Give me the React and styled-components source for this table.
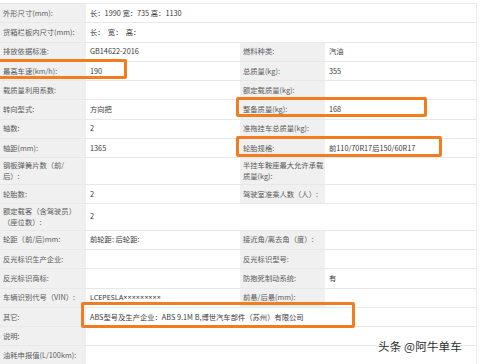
import React from "react";
import styled, { createGlobalStyle } from "styled-components";

const GlobalStyle = createGlobalStyle`
  html, body {
    margin: 0;
    padding: 0;
    background: #ffffff;
  }
  body {
    font-family: 'Noto Sans CJK SC', 'Noto Sans', sans-serif;
  }
`;

const Page = styled.div`
  position: relative;
  width: 480px;
  height: 364px;
  overflow: hidden;
  padding-top: 3px;
  box-sizing: border-box;
`;

const Table = styled.div`
  width: 477px;
  border-top: 1px solid #e8e8e8;
  border-right: 1px solid #ececec;
  box-sizing: border-box;
`;

const Row = styled.div`
  display: grid;
  grid-template-columns: 86px 154px 85px 1fr;
  min-height: ${p => (p.tall ? "26.5px" : "19.3px")};
  border-bottom: 1px solid #e8e8e8;
  box-sizing: border-box;
`;

const Cell = styled.div`
  display: flex;
  align-items: center;
  grid-column: span ${p => p.span || 1};
  font-family: ${p => (p.latin ? "'Noto Sans', 'Noto Sans CJK SC', sans-serif" : "inherit")};
  font-size: 7.3px;
  line-height: 11px;
  white-space: pre;
  overflow: hidden;
  padding: 1px 0 1px ${p => (p.label ? "3px" : "4px")};
  background: ${p => (p.label ? "#f0f0f0" : "#ffffff")};
  color: ${p => (p.label ? "#5a5a5a" : "#3a3a3a")};
`;

const Highlight = styled.div`
  position: absolute;
  border: 3px solid #f47c20;
  border-radius: 2px;
  box-sizing: border-box;
  pointer-events: none;
`;

const Watermark = styled.div`
  position: absolute;
  right: 18px;
  top: 338px;
  font-size: 11.5px;
  color: #2e2e2e;
  letter-spacing: 0.2px;
  text-shadow: 0 0 2px #ffffff, 0 0 3px #ffffff;
`;

const L = (text) => ({ label: true, text });
const V = (text, span, latin) => ({ label: false, text, span, latin });

const rows = [
  [L("外形尺寸(mm):"), V("长：1990 宽：735 高：1130", 3)],
  [L("货箱栏板内尺寸(mm):"), V("长：  宽：  高：", 3)],
  [L("排放依据标准:"), V("GB14622-2016"), L("燃料种类:"), V("汽油")],
  [L("最高车速(km/h):"), V("190"), L("总质量(kg):"), V("355")],
  [L("载质量利用系数:"), V(""), L("额定载质量(kg):"), V("")],
  [L("转向型式:"), V("方向把"), L("整备质量(kg):"), V("168")],
  [L("轴数:"), V("2"), L("准拖挂车总质量(kg):"), V("")],
  [L("轴距(mm):"), V("1365"), L("轮胎规格:"), V("前110/70R17后150/60R17")],
  [L("钢板弹簧片数（前/\n后）:"), V(""), L("半挂车鞍座最大允许承载\n质量(kg):"), V("")],
  [L("轮胎数:"), V("2"), L("驾驶室准乘人数（人）:"), V("")],
  [L("额定载客（含驾驶员）\n（座位数）:"), V("2", 3)],
  [L("轮距（前/后)mm:"), V("前轮距: 后轮距:"), L("接近角/离去角（度）:"), V("")],
  [L("反光标识生产企业:"), V(""), L("反光标识型号:"), V("")],
  [L("反光标识商标:"), V(""), L("防抱死制动系统:"), V("有")],
  [L("车辆识别代号（VIN）:"), V("LCEPESLA×××××××××", 1, true), L("前悬/后悬(mm):"), V("")],
  [L("其它:"), V("ABS型号及生产企业：ABS 9.1M B,博世汽车部件（苏州）有限公司", 3)],
  [L("说明:"), V("", 3)],
  [L("油耗申报值(L/100km):"), V("", 3)],
];

const highlights = [
  { left: -3, top: 59, width: 130, height: 20 },
  { left: 236, top: 97, width: 191, height: 20 },
  { left: 236, top: 136, width: 206, height: 21 },
  { left: 81, top: 302, width: 274, height: 26 },
];

export default function App() {
  return (
    <Page>
      <GlobalStyle />
      <Table>
        {rows.map((cells, i) => (
          <Row key={i} tall={cells.some(c => c.text.includes("\n"))}>
            {cells.map((c, j) => (
              <Cell key={j} label={c.label} span={c.span} latin={c.latin}>
                {c.text}
              </Cell>
            ))}
          </Row>
        ))}
      </Table>
      {highlights.map((h, i) => (
        <Highlight key={i} style={h} />
      ))}
      <Watermark>头条 @阿牛单车</Watermark>
    </Page>
  );
}
